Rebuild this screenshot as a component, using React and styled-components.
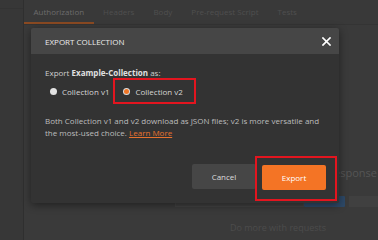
import React from "react";
import styled, { createGlobalStyle } from "styled-components";

const Global = createGlobalStyle`
  html, body { margin: 0; padding: 0; }
  body {
    width: 378px;
    height: 240px;
    overflow: hidden;
    background: #3a3a3a;
    font-family: "Open Sans", "Noto Sans", sans-serif;
  }
  * { box-sizing: border-box; }
`;

const Screen = styled.div`
  position: relative;
  display: flex;
  width: 378px;
  height: 240px;
  background: #3a3a3a;
`;

const Sidebar = styled.div`
  width: 24px;
  flex: none;
  background: #373737;
  border-right: 1px solid #2f2f2f;
  display: flex;
  flex-direction: column;
`;

const SidebarTop = styled.div`
  height: 9px;
  border-bottom: 1px solid #333;
`;

const Main = styled.div`
  flex: 1;
  display: flex;
  flex-direction: column;
  min-width: 0;
`;

const TabBar = styled.div`
  height: 25px;
  display: flex;
  align-items: stretch;
  background: #393939;
  border-bottom: 1px solid #343434;
`;

const Tab = styled.div`
  padding: 1px 9.5px 0;
  display: flex;
  align-items: center;
  font-size: 8px;
  white-space: nowrap;
  color: ${(p) => (p.$active ? "#6c6c6c" : "#4f4f4f")};
  border-bottom: 2px solid ${(p) => (p.$active ? "#8a4a22" : "transparent")};
`;

const Content = styled.div`
  flex: 1;
  display: flex;
  flex-direction: column;
  padding-top: 140px;
`;

const ResponseTitle = styled.div`
  align-self: flex-end;
  margin-right: 1px;
  font-size: 11px;
  line-height: 16px;
  color: #555;
  white-space: nowrap;
`;

const ControlsRow = styled.div`
  display: flex;
  margin-top: 15px;
  margin-left: 151px;
  height: 11px;
`;

const Field = styled.div`
  width: 129px;
  background: #3e3e3e;
  border: 1px solid #424242;
`;

const BlueButton = styled.div`
  width: 41px;
  background: #2d4866;
  border-radius: 1px;
  margin-right: 4px;
`;

const GreyBox = styled.div`
  flex: 1;
  background: #404040;
`;

const Hint = styled.div`
  margin-top: 14px;
  margin-left: 206px;
  font-size: 9px;
  color: #4c4c4c;
  white-space: nowrap;
`;

const Modal = styled.div`
  position: absolute;
  left: 31px;
  top: 28px;
  width: 308px;
  height: 175px;
  display: flex;
  flex-direction: column;
  background: #333333;
  border-radius: 2px;
  box-shadow: 0 2px 8px rgba(0, 0, 0, 0.45);
  overflow: hidden;
`;

const ModalHeader = styled.div`
  height: 26px;
  flex: none;
  display: flex;
  align-items: center;
  justify-content: space-between;
  padding: 0 8px 0 14px;
  background: #464646;
`;

const ModalTitle = styled.div`
  font-size: 8px;
  color: #ececec;
`;

const CloseButton = styled.div`
  width: 9px;
  height: 9px;
  display: flex;
`;

const ModalBody = styled.div`
  flex: 1;
  display: flex;
  flex-direction: column;
  padding: 13px 14px 0 14px;
`;

const Lead = styled.div`
  font-size: 8px;
  line-height: 12px;
  color: #cfcfcf;
  b { font-weight: 700; color: #e0e0e0; }
`;

const RadioRow = styled.div`
  display: flex;
  align-items: center;
  margin-top: -1px;
`;

const RadioOption = styled.label`
  display: flex;
  align-items: center;
  gap: 5px;
  height: 26px;
  font-size: 8px;
  color: #d6d6d6;
  white-space: nowrap;
  ${(p) =>
    p.$highlight
      ? `border: 2px solid #e3151f; padding: 0 11px 0 8px; margin-left: 4px;`
      : `margin-left: 5px;`}
`;

const RadioDot = styled.span`
  flex: none;
  border-radius: 50%;
  width: ${(p) => (p.$checked ? "5px" : "7px")};
  height: ${(p) => (p.$checked ? "5px" : "7px")};
  margin: ${(p) => (p.$checked ? "0 1px" : "0")};
  background: ${(p) => (p.$checked ? "#f07526" : "#e2e2e2")};
  box-shadow: ${(p) => (p.$checked ? "0 0 0 1px #dcdcdc" : "none")};
`;

const Paragraph = styled.p`
  margin: 11px 0 0 0;
  font-size: 8px;
  line-height: 12px;
  color: #bdbdbd;
`;

const LearnMore = styled.span`
  color: #e8722e;
  text-decoration: underline;
`;

const Footer = styled.div`
  display: flex;
  justify-content: flex-end;
  align-items: flex-start;
  padding: 0 2px 2px 0;
`;

const Button = styled.button`
  width: 64px;
  height: 25px;
  border: none;
  border-radius: 2px;
  font-family: inherit;
  font-size: 8px;
  cursor: pointer;
  color: ${(p) => (p.$primary ? "#ffffff" : "#dddddd")};
  background: ${(p) => (p.$primary ? "#f47425" : "#464646")};
`;

const CancelButton = styled(Button)`
  margin-top: 8px;
  margin-right: -1px;
`;

const Highlight = styled.div`
  border: 2px solid #e3151f;
  padding: 6px 9px 9px 5px;
`;

export default function App() {
  return (
    <>
      <Global />
      <Screen>
        <Sidebar>
          <SidebarTop />
        </Sidebar>
        <Main>
          <TabBar>
            <Tab $active>Authorization</Tab>
            <Tab>Headers</Tab>
            <Tab>Body</Tab>
            <Tab>Pre-request Script</Tab>
            <Tab>Tests</Tab>
          </TabBar>
          <Content>
            <ResponseTitle>Response</ResponseTitle>
            <ControlsRow>
              <Field />
              <BlueButton />
              <GreyBox />
            </ControlsRow>
            <Hint>Do more with requests</Hint>
          </Content>
        </Main>

        <Modal>
          <ModalHeader>
            <ModalTitle>EXPORT COLLECTION</ModalTitle>
            <CloseButton>
              <svg width="9" height="9" viewBox="0 0 9 9">
                <path
                  d="M1 1 L8 8 M8 1 L1 8"
                  stroke="#ffffff"
                  strokeWidth="1.7"
                  strokeLinecap="square"
                />
              </svg>
            </CloseButton>
          </ModalHeader>
          <ModalBody>
            <Lead>
              Export <b>Example-Collection</b> as:
            </Lead>
            <RadioRow>
              <RadioOption>
                <RadioDot />
                Collection v1
              </RadioOption>
              <RadioOption $highlight>
                <RadioDot $checked />
                Collection v2
              </RadioOption>
            </RadioRow>
            <Paragraph>
              Both Collection v1 and v2 download as JSON files; v2 is more
              versatile and the most-used choice.{" "}
              <LearnMore>Learn More</LearnMore>
            </Paragraph>
          </ModalBody>
          <Footer>
            <CancelButton>Cancel</CancelButton>
            <Highlight>
              <Button $primary>Export</Button>
            </Highlight>
          </Footer>
        </Modal>
      </Screen>
    </>
  );
}
